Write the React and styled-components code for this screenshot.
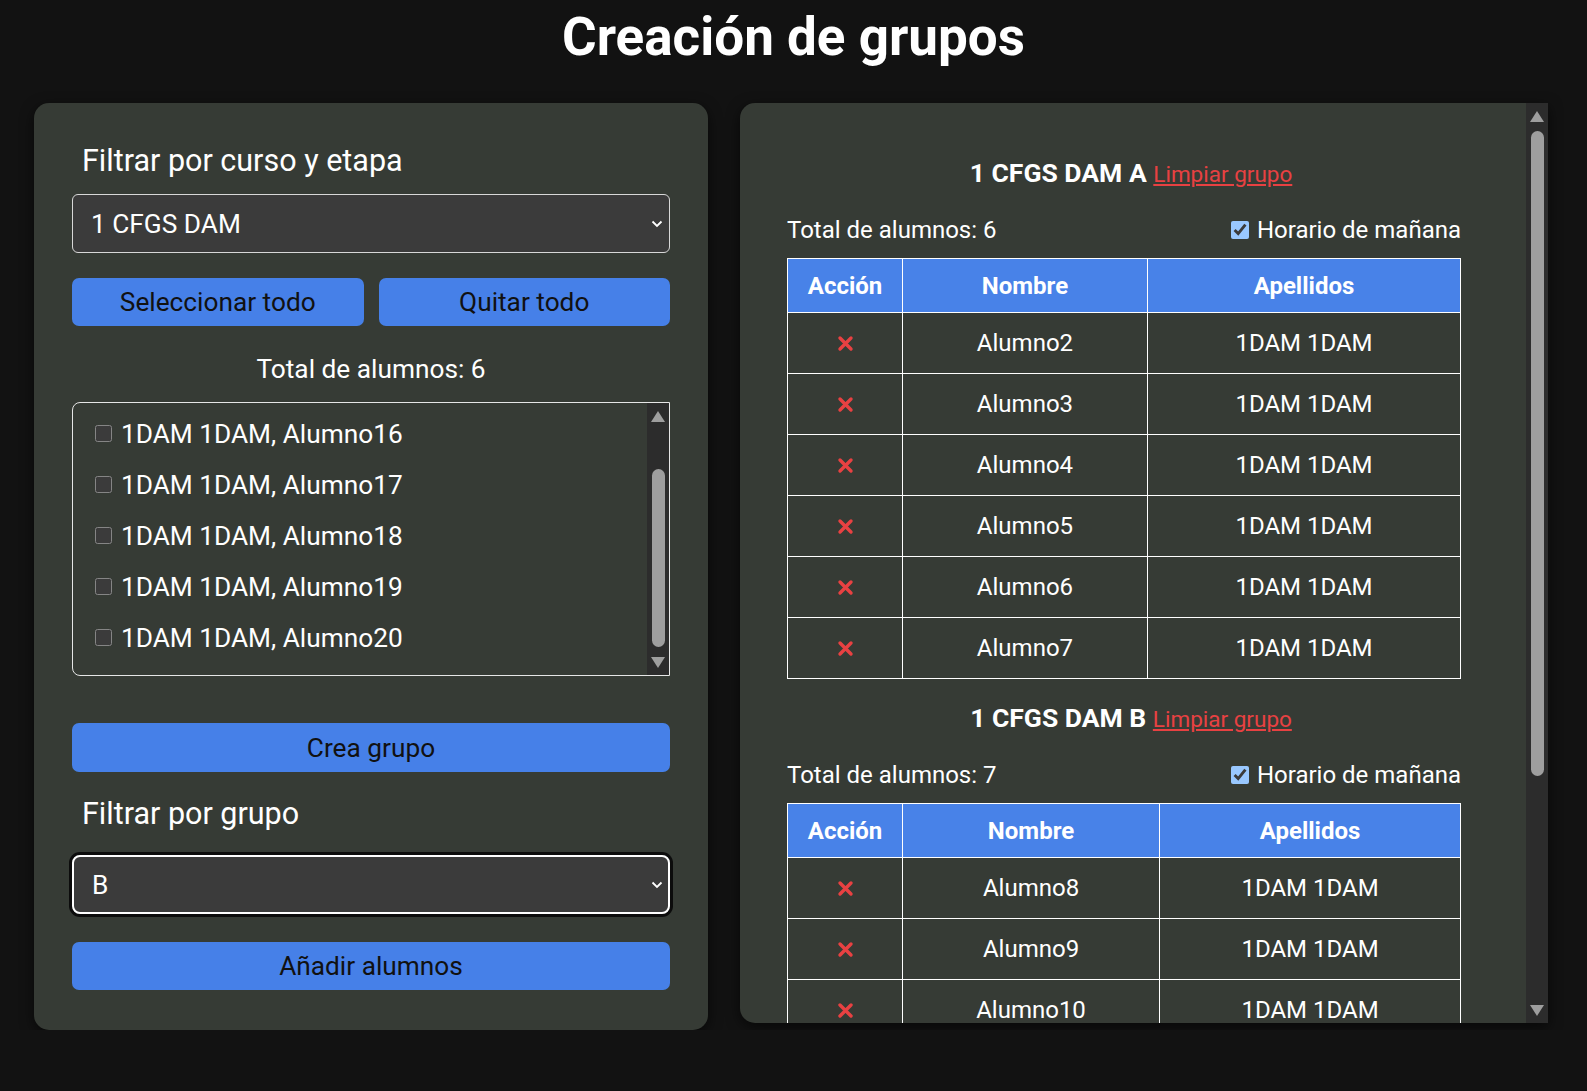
import React, { useLayoutEffect, useRef, useState } from "react";
import styled, { createGlobalStyle, css } from "styled-components";

const GlobalStyle = createGlobalStyle`
  * { box-sizing: border-box; }
  html, body {
    margin: 0;
    padding: 0;
    background: #121212;
    color: #fff;
    font-family: Roboto, "Liberation Sans", sans-serif;
  }
`;

const Page = styled.div`
  padding-top: 6px;
`;

const Title = styled.h1`
  margin: 0;
  text-align: center;
  font-size: 53px;
  line-height: 62px;
  font-weight: 700;
`;

const Columns = styled.main`
  display: flex;
  gap: 32px;
  padding-left: 34px;
  margin-top: 35px;
`;

const LeftPanel = styled.section`
  width: 674px;
  height: 927px;
  padding: 38px;
  background: #363b35;
  border-radius: 15px;
  box-shadow: 0 4px 14px rgba(0, 0, 0, 0.6);
  display: flex;
  flex-direction: column;
  font-size: 26.25px;
`;

const RightPanel = styled.section`
  width: 808px;
  height: 920px;
  display: flex;
  background: #363b35;
  border-radius: 15px 0 0 15px;
  box-shadow: 0 4px 14px rgba(0, 0, 0, 0.6);
  overflow: hidden;
  font-size: 24px;
`;

const hiddenScroll = css`
  overflow-y: auto;
  scrollbar-width: none;
  &::-webkit-scrollbar {
    display: none;
  }
`;

const PanelScroll = styled.div`
  flex: 1;
  padding: 52px 0 30px 47px;
  ${hiddenScroll}
`;

/* scrollbar drawing */

const Bar = styled.div`
  width: 22px;
  flex: none;
  display: flex;
  flex-direction: column;
  background: #2c2c2c;
`;

const ArrowBtn = styled.div`
  height: 24px;
  flex: none;
  display: flex;
  align-items: center;
  justify-content: center;

  &::before {
    content: "";
    width: 0;
    height: 0;
    border-left: 7px solid transparent;
    border-right: 7px solid transparent;
    ${(p) =>
      p.$dir === "up"
        ? css`
            border-bottom: 11px solid #9e9e9e;
            margin-top: 3px;
          `
        : css`
            border-top: 11px solid #9e9e9e;
            margin-bottom: 2px;
          `}
  }
`;

const Track = styled.div`
  flex: 1;
  display: flex;
  flex-direction: column;
  padding: 4px 0;
`;

const Thumb = styled.div`
  width: 13px;
  margin: 0 auto;
  background: #9e9e9e;
  border-radius: 7px;
`;

function Scrollbar({ metrics }) {
  const { ratio, offset } = metrics;
  return (
    <Bar>
      <ArrowBtn $dir="up" />
      <Track>
        <div style={{ flexGrow: offset }} />
        <Thumb style={{ flexGrow: ratio }} />
        <div style={{ flexGrow: Math.max(0, 1 - ratio - offset) }} />
      </Track>
      <ArrowBtn $dir="down" />
    </Bar>
  );
}

function useScrollMetrics(ref, toBottom) {
  const [metrics, setMetrics] = useState({ ratio: 1, offset: 0 });

  useLayoutEffect(() => {
    const el = ref.current;
    if (!el) return;
    if (toBottom) el.scrollTop = el.scrollHeight;
    const update = () =>
      setMetrics({
        ratio: el.clientHeight / el.scrollHeight,
        offset: el.scrollTop / el.scrollHeight,
      });
    update();
    el.addEventListener("scroll", update);
    return () => el.removeEventListener("scroll", update);
  }, [ref, toBottom]);

  return metrics;
}

/* left panel */

const PanelHeading = styled.h3`
  margin: ${(p) => p.$mt || 0}px 0 0;
  padding-left: 10px;
  font-size: 30.5px;
  line-height: 40px;
  font-weight: 400;
`;

const SelectWrap = styled.div`
  position: relative;
  margin-top: ${(p) => p.$mt}px;
  border-radius: 8px;
  ${(p) =>
    p.$focused &&
    css`
      box-shadow: 0 0 0 3px #0c0c0c;
    `}
`;

const Select = styled.select`
  appearance: none;
  display: block;
  width: 100%;
  height: 59px;
  padding: 0 40px 0 18px;
  background: #3b3b3b;
  color: #fff;
  font-family: inherit;
  font-size: 26.25px;
  border: ${(p) => (p.$focused ? "2.5px solid #fff" : "1px solid #d8d8d8")};
  border-radius: ${(p) => (p.$focused ? "8px" : "6px")};
  outline: none;
  color-scheme: dark;
`;

const Chevron = styled.svg`
  position: absolute;
  right: 7px;
  top: 50%;
  margin-top: -4px;
  width: 12px;
  height: 8px;
  pointer-events: none;
`;

const ButtonRow = styled.div`
  display: grid;
  grid-template-columns: 1fr 1fr;
  gap: 15px;
  margin-top: 25px;
`;

const Button = styled.button`
  display: block;
  width: 100%;
  height: ${(p) => p.$h || 48}px;
  margin-top: ${(p) => p.$mt || 0}px;
  background: #4680e8;
  color: #111;
  border: none;
  border-radius: 7px;
  font-family: inherit;
  font-size: 26.25px;
  cursor: pointer;
`;

const Count = styled.p`
  margin: 26px 0 0;
  text-align: center;
  line-height: 34px;
`;

const ListBox = styled.div`
  margin-top: 16px;
  height: 274px;
  display: flex;
  border: 1px solid #e6e6e6;
  border-radius: 8px 0 0 8px;
  overflow: hidden;
`;

const ListScroll = styled.div`
  flex: 1;
  padding: 12px 0 12px 22px;
  ${hiddenScroll}
`;

const StudentItem = styled.label`
  display: flex;
  align-items: center;
  gap: 9px;
  height: 51px;
`;

const Check = styled.input`
  margin: 0;
  width: ${(p) => p.$size || 17}px;
  height: ${(p) => p.$size || 17}px;
  color-scheme: dark;
`;

/* right panel */

const Group = styled.div`
  width: 674px;
  margin-bottom: 21px;
`;

const GroupTitle = styled.h3`
  margin: 0;
  padding-left: 14px;
  text-align: center;
  font-size: 26.5px;
  line-height: 36px;
  font-weight: 700;
`;

const ClearLink = styled.a`
  color: #e84142;
  font-size: 22.5px;
  font-weight: 400;
  text-decoration: underline;
  cursor: pointer;
`;

const InfoRow = styled.div`
  display: flex;
  justify-content: space-between;
  align-items: center;
  margin: 21px 0 11px;
  line-height: 34px;
`;

const Morning = styled.label`
  display: flex;
  align-items: center;
  gap: 8px;
`;

const Table = styled.table`
  width: 100%;
  border-collapse: collapse;

  th,
  td {
    border: 1px solid #fff;
    text-align: center;
    padding: 0 25px;
  }

  th {
    background: #4882e8;
    font-weight: 700;
    height: 54px;
  }

  td {
    height: 61px;
  }

  th:first-child {
    width: 115px;
    padding: 0 10px;
  }
`;

const RemoveIcon = styled.svg`
  display: block;
  margin: 0 auto;
  width: 17px;
  height: 17px;
  cursor: pointer;
`;

function Remove() {
  return (
    <RemoveIcon viewBox="0 0 17 17">
      <path
        d="M3 3L14 14M14 3L3 14"
        stroke="#e84142"
        strokeWidth="3.4"
        strokeLinecap="round"
      />
    </RemoveIcon>
  );
}

function Dropdown({ value, focused, mt }) {
  return (
    <SelectWrap $mt={mt} $focused={focused}>
      <Select $focused={focused} defaultValue={value}>
        <option>{value}</option>
      </Select>
      <Chevron viewBox="0 0 12 8">
        <path d="M1.5 1.5L6 6L10.5 1.5" stroke="#fff" strokeWidth="1.8" fill="none" />
      </Chevron>
    </SelectWrap>
  );
}

const listStudents = [15, 16, 17, 18, 19, 20].map((n) => `1DAM 1DAM, Alumno${n}`);

const groups = [
  { name: "1 CFGS DAM A", students: [2, 3, 4, 5, 6, 7] },
  { name: "1 CFGS DAM B", students: [8, 9, 10, 11, 12, 13, 14] },
];

function GroupBlock({ group }) {
  return (
    <Group>
      <GroupTitle>
        {group.name} <ClearLink>Limpiar grupo</ClearLink>
      </GroupTitle>
      <InfoRow>
        <span>Total de alumnos: {group.students.length}</span>
        <Morning>
          <Check type="checkbox" $size={18} defaultChecked />
          Horario de mañana
        </Morning>
      </InfoRow>
      <Table>
        <thead>
          <tr>
            <th>Acción</th>
            <th>Nombre</th>
            <th>Apellidos</th>
          </tr>
        </thead>
        <tbody>
          {group.students.map((n) => (
            <tr key={n}>
              <td>
                <Remove />
              </td>
              <td>Alumno{n}</td>
              <td>1DAM 1DAM</td>
            </tr>
          ))}
        </tbody>
      </Table>
    </Group>
  );
}

export default function App() {
  const listRef = useRef(null);
  const panelRef = useRef(null);
  const listMetrics = useScrollMetrics(listRef, true);
  const panelMetrics = useScrollMetrics(panelRef, false);

  return (
    <Page>
      <GlobalStyle />
      <Title>Creación de grupos</Title>
      <Columns>
        <LeftPanel>
          <PanelHeading>Filtrar por curso y etapa</PanelHeading>
          <Dropdown value="1 CFGS DAM" mt={13} />
          <ButtonRow>
            <Button>Seleccionar todo</Button>
            <Button>Quitar todo</Button>
          </ButtonRow>
          <Count>Total de alumnos: 6</Count>
          <ListBox>
            <ListScroll ref={listRef}>
              {listStudents.map((s) => (
                <StudentItem key={s}>
                  <Check type="checkbox" />
                  {s}
                </StudentItem>
              ))}
            </ListScroll>
            <Scrollbar metrics={listMetrics} />
          </ListBox>
          <Button $mt={47} $h={49}>
            Crea grupo
          </Button>
          <PanelHeading $mt={22}>Filtrar por grupo</PanelHeading>
          <Dropdown value="B" focused mt={21} />
          <Button $mt={28}>Añadir alumnos</Button>
        </LeftPanel>
        <RightPanel>
          <PanelScroll ref={panelRef}>
            {groups.map((g) => (
              <GroupBlock key={g.name} group={g} />
            ))}
          </PanelScroll>
          <Scrollbar metrics={panelMetrics} />
        </RightPanel>
      </Columns>
    </Page>
  );
}
